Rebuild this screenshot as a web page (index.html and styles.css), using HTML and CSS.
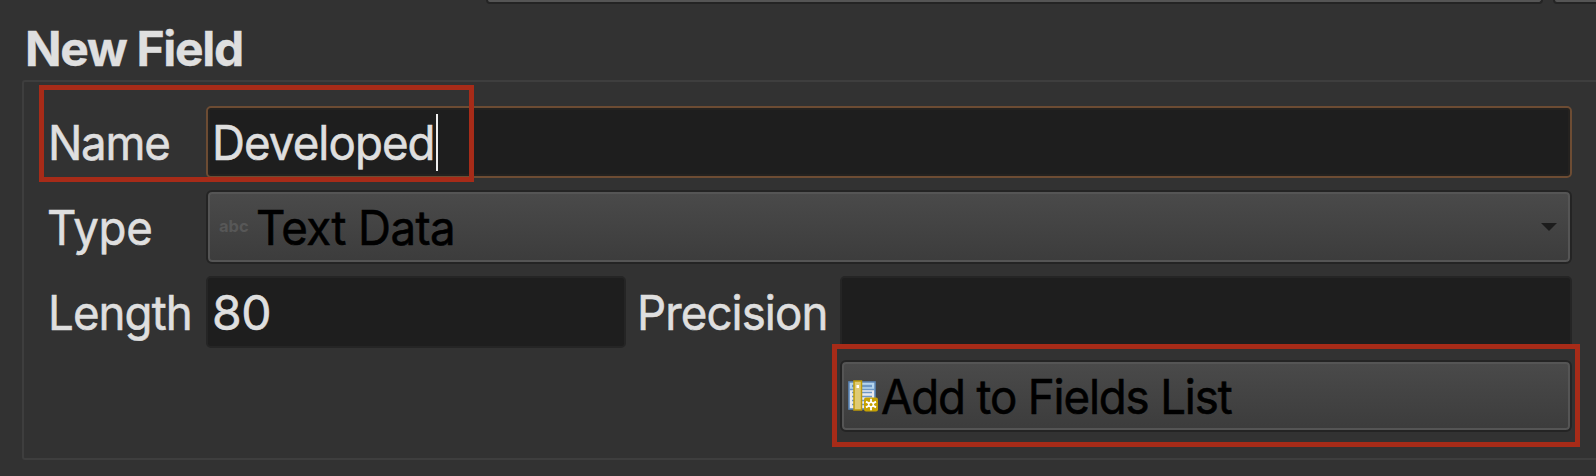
FILE: index.html
```html
<!DOCTYPE html>
<html lang="en">
<head>
<meta charset="utf-8">
<title>New Field</title>
<link rel="stylesheet" href="styles.css">
</head>
<body>
<div class="top-strip"><div class="stub stub-wide"></div><div class="stub stub-end"></div></div>
<h1 class="title">New Field</h1>
<section class="group">
  <div class="row">
    <label class="label"><span class="text name">Name</span></label>
    <div class="input focused"><span class="text developed">Developed</span><i class="caret"></i></div>
  </div>
  <div class="row tall">
    <label class="label"><span class="text type">Type</span></label>
    <div class="button combo">
      <span class="abc">abc</span><span class="text text-data">Text Data</span>
      <svg class="arrow" width="16" height="8" viewBox="0 0 16 8"><path d="M0 0H16L8 8Z" fill="#1c1c1c"/></svg>
    </div>
  </div>
  <div class="row">
    <label class="label"><span class="text length">Length</span></label>
    <div class="input short"><span class="text eighty">80</span></div>
    <label class="label precision-label"><span class="text precision">Precision</span></label>
    <div class="input"></div>
  </div>
  <div class="row end">
    <div class="button add">
      <svg class="icon" width="30" height="32" viewBox="0 0 30 32">
        <rect x="1" y="2" width="26" height="27" fill="#e9eaee" stroke="#5b87b8" stroke-width="1.6"/>
        <rect x="2" y="3" width="24" height="6" fill="#b5d5ed"/>
        <path d="M4 6H24" stroke="#6d98c7" stroke-width="2.4"/>
        <path d="M1 9.5H27" stroke="#6d98c7" stroke-width="1.5"/>
        <path d="M4 12.5H24M4 16.500H24M4 20.500H17M4 24.500H16" stroke="#6d98c7" stroke-width="1.3"/>
        <rect x="6" y="1" width="7.500" height="29" fill="#dfca72" stroke="#bd9a09" stroke-width="1.5"/>
        <rect x="8.500" y="5" width="2.500" height="3" fill="#fff"/>
        <rect x="16" y="17.500" width="14" height="14" rx="2" fill="#c6a100"/>
        <path d="M23 18.800V30.200M18 21.600L28 27.400M18 27.400L28 21.600" stroke="#fff" stroke-width="1.8"/>
        <circle cx="23" cy="24.500" r="3" fill="#fff"/>
        <circle cx="23" cy="24.500" r="1.500" fill="#c6a100"/>
      </svg>
      <span class="text add-text">Add to Fields List</span>
    </div>
  </div>
</section>
<div class="mark mark-name"></div>
<div class="mark mark-add"></div>
</body>
</html>
```
FILE: styles.css
```css
* { box-sizing: border-box; }
body {
  margin: 0;
  width: 1596px;
  height: 476px;
  overflow: hidden;
  position: relative;
  background: #323232;
  color: #dfdfdf;
  font: 400 48px/72px Inter, "Liberation Sans", sans-serif;
  white-space: nowrap;
}
.top-strip { display: flex; gap: 10px; height: 4px; padding-left: 486px; }
.stub {
  flex: none;
  height: 4px;
  border: 2px solid #242424;
  border-top: 0;
  border-radius: 0 0 6px 6px;
  background: #555;
}
.stub-wide { width: 1057px; }
.stub-end { width: 60px; }
.title {
  margin: 0;
  height: 76px;
  padding: 9px 0 0 25px;
  font-size: 48px;
  font-weight: 700;
  letter-spacing: -1.3px;
  -webkit-text-stroke: .4px currentColor;
}
.group {
  margin-left: 22px;
  width: 1600px;
  height: 380px;
  padding: 24px 0 0 24px;
  border: 2px solid #3e3e3e;
  border-radius: 3px;
  display: flex;
  flex-direction: column;
  gap: 12px;
}
.row { display: flex; width: 1524px; height: 72px; flex: none; }
.row.tall { height: 74px; line-height: 74px; }
.row.end { justify-content: flex-end; }
.label { flex: none; width: 158px; }
.precision-label { width: 214px; padding-left: 11px; }
.text {
  display: inline-block;
  transform: translateY(1px) scaleX(.95);
  transform-origin: 0 50%;
  -webkit-text-stroke: .6px currentColor;
}
.name { letter-spacing: -1.3px; }
.developed { width: 219px; margin-left: -1px; letter-spacing: -.95px; }
.type { letter-spacing: -.35px; margin-left: -1px; }
.text-data { letter-spacing: -.6px; margin-left: -1px; }
.length { letter-spacing: -.95px; }
.eighty { transform: translateY(1px); letter-spacing: -.5px; margin-left: -1px; }
.precision { letter-spacing: -.95px; }
.add-text { letter-spacing: -1.2px; }
.input {
  flex: 1;
  display: flex;
  align-items: center;
  padding-left: 5px;
  background: #1e1e1e;
  border: 2px solid #252525;
  border-radius: 5px;
}
.input.short { flex: none; width: 420px; }
.focused { border-color: #6d4c33; box-shadow: inset 0 0 0 2px #242220; }
.caret { width: 2px; height: 57px; background: #eee; margin-left: 5px; }
.button {
  position: relative;
  display: flex;
  align-items: center;
  color: #000;
  border: 2px solid #242424;
  border-radius: 6px;
  background: linear-gradient(#4a4a4a, #3c3c3c);
  box-shadow: inset 0 0 0 2px #555;
}
.combo { flex: 1; padding-left: 11px; }
.abc { width: 38px; margin-top: -3px; font-size: 16.5px; line-height: 20px; font-weight: 700; color: #575757; }
.arrow { margin-left: auto; margin-right: 13px; }
.add { width: 732px; padding-left: 6px; }
.icon { flex: none; margin-right: 3px; }
.mark { position: absolute; border: 5px solid #a72b18; }
.mark-name { left: 39px; top: 85px; width: 435px; height: 97px; }
.mark-add { left: 832px; top: 344px; width: 748px; height: 103px; }
```
